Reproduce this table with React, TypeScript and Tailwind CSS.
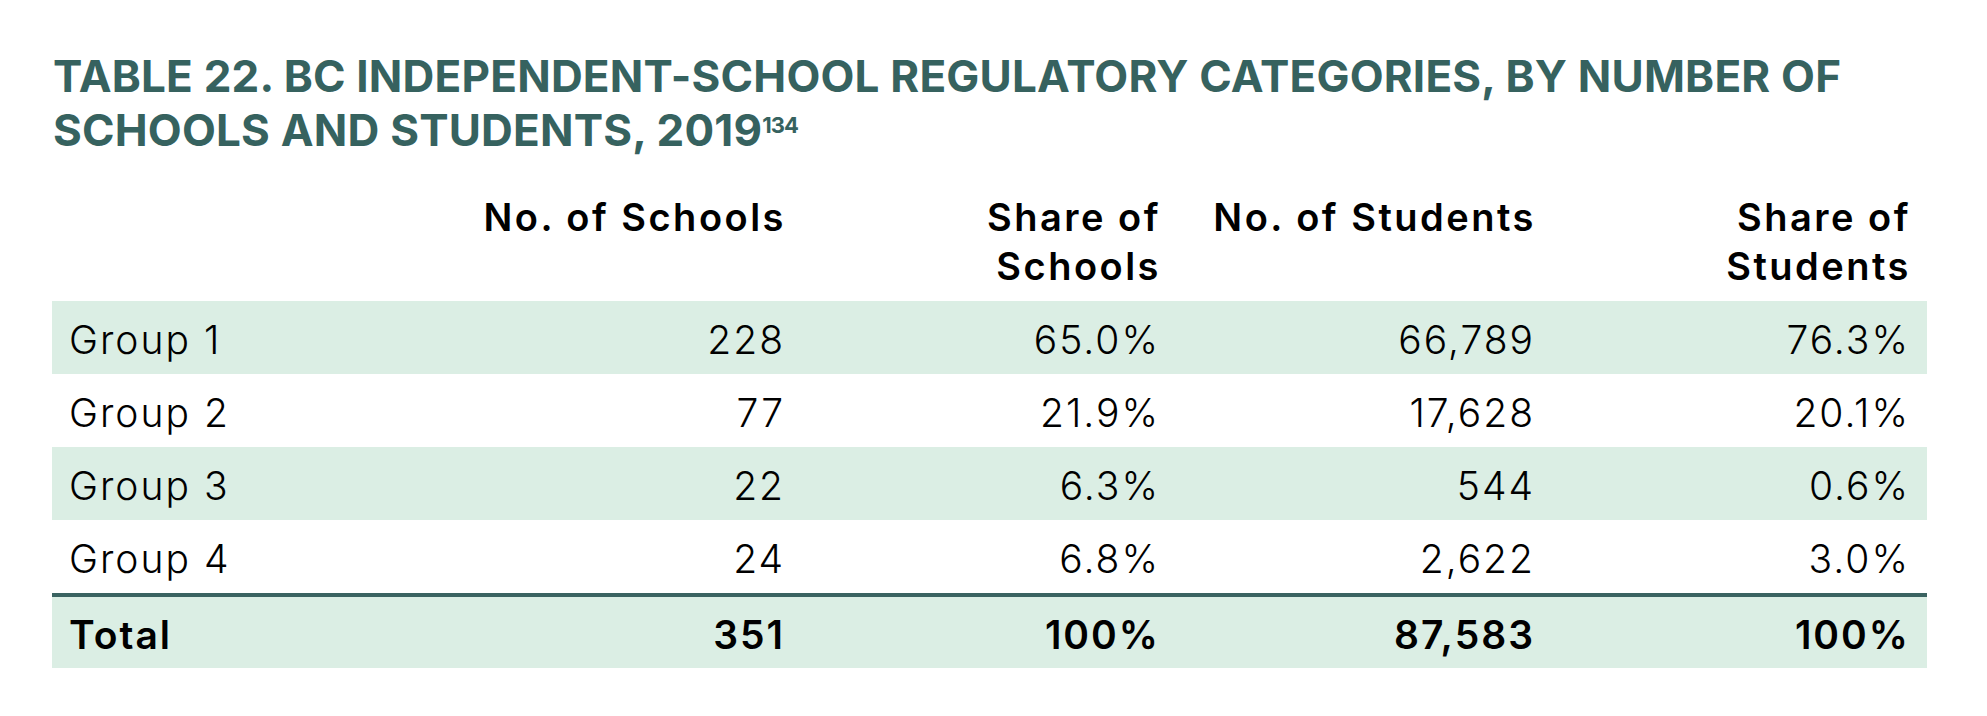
import React from 'react'

const rows = [
  { name: 'Group 1', schools: '228', shareSchools: '65.0%', students: '66,789', shareStudents: '76.3%' },
  { name: 'Group 2', schools: '77', shareSchools: '21.9%', students: '17,628', shareStudents: '20.1%' },
  { name: 'Group 3', schools: '22', shareSchools: '6.3%', students: '544', shareStudents: '0.6%' },
  { name: 'Group 4', schools: '24', shareSchools: '6.8%', students: '2,622', shareStudents: '3.0%' },
]

function Cell({ children, first }: { children: React.ReactNode; first?: boolean }) {
  return (
    <div className={`flex items-center pt-[6px] ${first ? 'justify-start pl-[17px]' : 'justify-end pr-[17px]'}`}>
      {children}
    </div>
  )
}

export default function App() {
  return (
    <div className="w-[1987px] h-[716px] bg-white font-['Inter',sans-serif] text-black">
      <div className="pt-[52px] pl-[53px]">
        <h1 className="text-[44px] leading-[49px] font-bold text-[#36625f] tracking-[0.2px]">
          TABLE 22. BC INDEPENDENT-SCHOOL REGULATORY CATEGORIES, BY NUMBER OF
          <br />
          SCHOOLS AND STUDENTS, 2019<span className="text-[22px] align-[13px] tracking-[-1px]">134</span>
        </h1>
      </div>

      <div className="ml-[52px] w-[1875px] mt-[38px]">
        <div className="grid grid-cols-5 text-[38px] leading-[49px] font-semibold tracking-[2.5px] pb-[10px]">
          <div />
          <div className="flex items-start justify-end pr-[16px]">No. of Schools</div>
          <div className="text-right pr-[16px]">Share of<br />Schools</div>
          <div className="flex items-start justify-end pr-[16px]">No. of Students</div>
          <div className="text-right pr-[16px]">Share of<br />Students</div>
        </div>

        {rows.map((r, i) => (
          <div key={r.name} className={`grid grid-cols-5 h-[73px] text-[39px] font-light tracking-[2px] ${i % 2 === 0 ? 'bg-[#dbeee4]' : 'bg-white'}`}>
            <Cell first>{r.name}</Cell>
            <Cell>{r.schools}</Cell>
            <Cell>{r.shareSchools}</Cell>
            <Cell>{r.students}</Cell>
            <Cell>{r.shareStudents}</Cell>
          </div>
        ))}

        <div className="grid grid-cols-5 h-[75px] border-t-4 border-[#3a6361] bg-[#dbeee4] text-[39px] font-semibold tracking-[2px]">
          <Cell first>Total</Cell>
          <Cell>351</Cell>
          <Cell>100%</Cell>
          <Cell>87,583</Cell>
          <Cell>100%</Cell>
        </div>
      </div>
    </div>
  )
}
